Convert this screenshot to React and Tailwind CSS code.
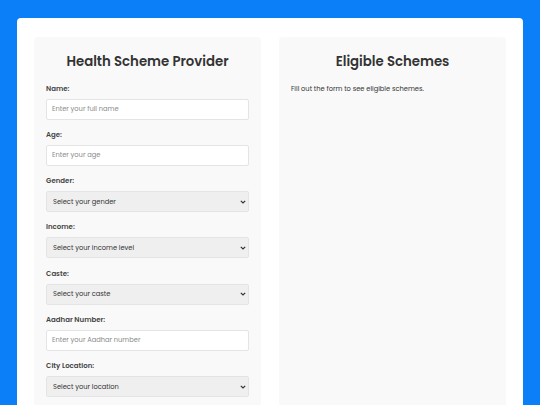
import React from "react";

const font = { fontFamily: "Poppins, 'Open Sans', 'Noto Sans', sans-serif" };

function Label({ children }) {
  return (
    <label className="block text-[7px] leading-[12px] font-semibold text-[#444] mb-[4px]">
      {children}
    </label>
  );
}

function TextField({ label, placeholder }) {
  return (
    <div className="mb-[9.3px]">
      <Label>{label}</Label>
      <input
        type="text"
        placeholder={placeholder}
        className="block w-full h-[21px] px-[5px] text-[6.7px] bg-white border border-[#e4e4e4] rounded-[2px] placeholder:text-[#8a8a8a] outline-none"
      />
    </div>
  );
}

function SelectField({ label, placeholder }) {
  return (
    <div className="mb-[9.3px]">
      <Label>{label}</Label>
      <div className="relative">
        <select className="block w-full h-[21px] pl-[6px] pr-[14px] text-[6.7px] text-[#333] bg-[#efefef] border border-[#e4e4e4] rounded-[2px] outline-none appearance-none">
          <option>{placeholder}</option>
        </select>
        <svg
          className="absolute right-[3px] top-[8.5px] pointer-events-none"
          width="6"
          height="4"
          viewBox="0 0 6 4"
        >
          <path d="M0.8 0.8 L3 3 L5.2 0.8" fill="none" stroke="#333" strokeWidth="1.2" />
        </svg>
      </div>
    </div>
  );
}

export default function App() {
  return (
    <div className="w-[540px] h-[405px] overflow-hidden bg-[#0a7ff7] pt-[18px] px-[17px]" style={font}>
      <div className="bg-white rounded-[4px] h-[420px] px-[17px] pt-[19px] flex gap-[18px]">
        <div className="flex-1 bg-[#f9f9f9] rounded-[4px] px-[12px] pt-[12px]">
          <h1 className="text-center text-[13.3px] leading-[26px] font-semibold text-[#333] mb-[7.5px]">
            Health Scheme Provider
          </h1>
          <TextField label="Name:" placeholder="Enter your full name" />
          <TextField label="Age:" placeholder="Enter your age" />
          <SelectField label="Gender:" placeholder="Select your gender" />
          <SelectField label="Income:" placeholder="Select your income level" />
          <SelectField label="Caste:" placeholder="Select your caste" />
          <TextField label="Aadhar Number:" placeholder="Enter your Aadhar number" />
          <SelectField label="City Location:" placeholder="Select your location" />
        </div>
        <div className="flex-1 bg-[#f9f9f9] rounded-[4px] px-[12px] pt-[12px]">
          <h2 className="text-center text-[13.3px] leading-[26px] font-semibold text-[#333] mb-[7.5px]">
            Eligible Schemes
          </h2>
          <p className="text-[6.7px] leading-[12px] text-[#333]">Fill out the form to see eligible schemes.</p>
        </div>
      </div>
    </div>
  );
}
